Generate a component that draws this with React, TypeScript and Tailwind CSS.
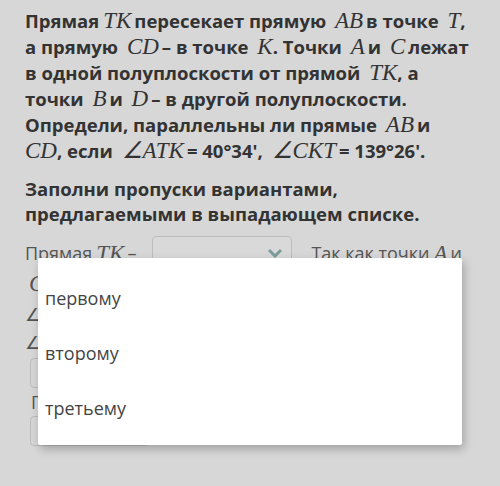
import React from "react";

const M: React.FC<{ children: React.ReactNode; tight?: boolean }> = ({ children, tight }) => (
  <span
    className={
      "font-['Liberation_Serif',serif] italic font-normal text-[23px] " +
      (tight ? "ml-[4px] mr-0" : "ml-[4px] mr-[3px]")
    }
  >
    {children}
  </span>
);

const App: React.FC = () => {
  const options = ["первому", "второму", "третьему"];

  return (
    <div className="relative w-[500px] h-[486px] overflow-hidden bg-[#d7d7d7] font-['Open_Sans',sans-serif] text-[#333333]">
      <div className="pl-[25px] pt-[8px] pr-[10px]">
        <div className="text-[18.5px] leading-[26px] font-bold whitespace-nowrap">
          <div>
            Прямая<M>TK</M>пересекает прямую <M>AB</M>в точке <M tight>T</M>,
          </div>
          <div>
            а прямую <M>CD</M>– в точке <M tight>K</M>. Точки <M>A</M>и <M>C</M>лежат
          </div>
          <div>
            в одной полуплоскости от прямой <M tight>TK</M>, а
          </div>
          <div>
            точки <M>B</M>и <M>D</M>– в другой полуплоскости.
          </div>
          <div>
            Определи, параллельны ли прямые <M>AB</M>и
          </div>
          <div>
            <span className="font-['Liberation_Serif',serif] italic font-normal text-[23px]">
              CD
            </span>
            , если <M>∠ATK</M>= 40°34', <M>∠CKT</M>= 139°26'.
          </div>
        </div>

        <div className="mt-[12px] text-[18.5px] leading-[25px] font-bold">
          <div>Заполни пропуски вариантами,</div>
          <div>предлагаемыми в выпадающем списке.</div>
        </div>

        <div className="mt-[10px] text-[18px] text-[#555] leading-[27px]">
          <div className="flex items-center h-[34px]">
            <span>Прямая</span>
            <M>TK</M>
            <span>–</span>
            <div className="ml-[16px] w-[140px] h-[34px] border border-[#bdbdbd] rounded-[4px] bg-[#d9d9d9] flex items-center justify-end pr-[8px]">
              <svg width="16" height="10" viewBox="0 0 16 10">
                <path d="M2 2 L8 8 L14 2" fill="none" stroke="#7d9c9c" strokeWidth="3" />
              </svg>
            </div>
            <span className="ml-[19px]">Так как точки</span>
            <M>A</M>
            <span>и</span>
          </div>
          <div className="h-[28px]">
            <M>C</M>
          </div>
          <div className="h-[28px] mt-[3px]">∠</div>
          <div className="h-[27px]">∠</div>
          <div className="mt-[2px] ml-[5px] w-[120px] h-[30px] border border-[#bdbdbd] rounded-[4px]" />
          <div className="mt-[1px] ml-[6px]">Г</div>
          <div className="ml-[5px] w-[120px] h-[30px] border border-[#bdbdbd] rounded-[4px]" />
        </div>
      </div>

      <div className="absolute left-[38px] top-[258px] w-[424px] h-[187px] bg-white rounded-[2px] shadow-[2px_4px_10px_rgba(0,0,0,0.25)] pt-[22px]">
        {options.map((o) => (
          <div key={o} className="h-[55px] pl-[7px] text-[18px] leading-[36px] text-[#444]">
            {o}
          </div>
        ))}
      </div>
    </div>
  );
};

export default App;
